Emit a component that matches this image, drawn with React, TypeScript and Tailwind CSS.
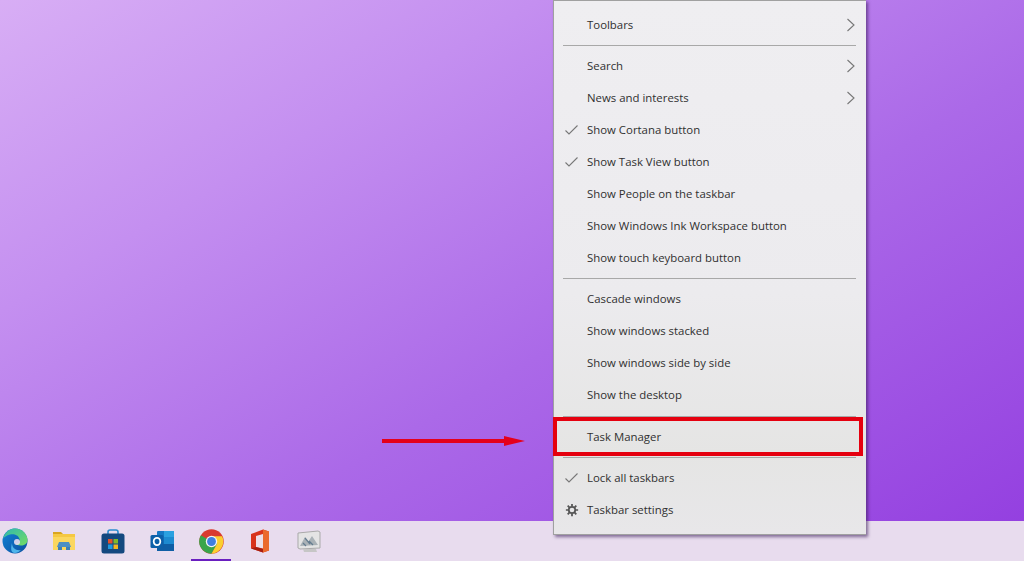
import React from "react";

const Check = () => (
  <svg width="15" height="12" viewBox="0 0 15 12" fill="none" stroke="#777" strokeWidth="1.1"><path d="M1.500 6.500 L5 10 L13.500 1.500" /></svg>
);
const Chevron = () => (
  <svg width="10" height="14" viewBox="0 0 10 14" fill="none" stroke="#777" strokeWidth="1.1"><path d="M1.500 1 L8 7 L1.500 13" /></svg>
);
const Gear = () => (
  <svg width="14" height="14" viewBox="0 0 24 24" fill="none" stroke="#555" strokeWidth="3">
    <circle cx="12" cy="12" r="5.500" />
    <path d="M12 1.500v4M12 18.500v4M1.500 12h4M18.500 12h4M4.600 4.600l2.800 2.800M16.600 16.600l2.800 2.800M4.600 19.400l2.800-2.800M16.600 7.400l2.800-2.800" />
  </svg>
);

function Row({ label, left, arrow }: { label: string; left?: React.ReactNode; arrow?: boolean }) {
  return (
    <div className="flex h-8 items-center">
      <div className="flex w-[33px] shrink-0 items-center justify-center pl-[2px]">{left}</div>
      <span className="flex-1 text-[11.400px] text-[#303030]">{label}</span>
      {arrow && <div className="mr-[10px] flex"><Chevron /></div>}
    </div>
  );
}
const Sep = ({ h }: { h: string }) => (
  <div className={`pl-[9px] pr-[10px] ${h}`}><div className="h-px w-full bg-[#a8a8a8]" /></div>
);

const Edge = () => (
  <svg width="26" height="26" viewBox="0 0 26 26">
    <defs>
      <linearGradient id="e1" x1="0" y1="0" x2="1" y2="1"><stop offset="0" stopColor="#2fb8b0" /><stop offset="1" stopColor="#74dc62" /></linearGradient>
      <linearGradient id="e2" x1="0" y1="0" x2="1" y2="1"><stop offset="0" stopColor="#1183d8" /><stop offset="1" stopColor="#0c4f9e" /></linearGradient>
    </defs>
    <circle cx="13" cy="13" r="12.500" fill="url(#e2)" />
    <path d="M1 11C3 3 9 .5 13 .5c7 0 12.500 5.500 12.500 11.500 0 4-3.500 5.500-6.500 5.500-3 0-5-1-5.500-2 3 0 5-1.500 4-4.500C16.500 7 12 5.500 8 6.500 4.500 7.500 2 9 1 11z" fill="url(#e1)" />
    <path d="M10 15c0 5 4 8 9 7-2 2-4 3-6 3C8 25 9 19 10 15z" fill="#4fb4ea" />
    <circle cx="15" cy="14" r="3" fill="#e8dcee" opacity=".9" />
  </svg>
);
const Folder = () => (
  <svg width="24" height="22" viewBox="0 0 24 22">
    <path d="M1 2h8l2 2H1z" fill="#d9a520" />
    <rect x="1" y="4" width="22" height="16" fill="#fbd75e" />
    <rect x="1" y="4" width="22" height="3" fill="#f5c842" />
    <path d="M7 12h10l2 5H5z" fill="#4c8fc4" />
    <rect x="6" y="17" width="4" height="3" fill="#3f7fb5" />
    <rect x="14" y="17" width="4" height="3" fill="#3f7fb5" />
  </svg>
);
const Store = () => (
  <svg width="24" height="25" viewBox="0 0 24 25">
    <path d="M7 5V3q0-2 2-2h6q2 0 2 2v2" fill="none" stroke="#2a8ccf" strokeWidth="1.600" />
    <rect x="0.500" y="4.500" width="23" height="20" rx="2.500" fill="#14497f" />
    <rect x="7" y="10" width="4.500" height="4.500" fill="#e2512c" />
    <rect x="12.500" y="10" width="4.500" height="4.500" fill="#7fb82a" />
    <rect x="7" y="15.500" width="4.500" height="4.500" fill="#1f9ae0" />
    <rect x="12.500" y="15.500" width="4.500" height="4.500" fill="#f2b51d" />
  </svg>
);
const Outlook = () => (
  <svg width="25" height="22" viewBox="0 0 25 22">
    <rect x="7" y="1" width="17" height="20" rx="1" fill="#1477c4" />
    <rect x="14" y="1" width="10" height="6" fill="#2aa0e0" />
    <rect x="14" y="7" width="10" height="7" fill="#1d8ad0" />
    <rect x="7" y="14" width="17" height="7" fill="#0f5ea5" />
    <rect x="0.500" y="5" width="13" height="13" rx="1.500" fill="#0d5fa8" />
    <ellipse cx="7" cy="11.500" rx="3.300" ry="3.700" fill="none" stroke="#fff" strokeWidth="1.800" />
  </svg>
);
const Chrome = () => (
  <svg width="25" height="25" viewBox="0 0 48 48">
    <circle cx="24" cy="24" r="23.500" fill="#d93a2f" />
    <path d="M24 24 L3.600 12.200 A23.500 23.500 0 0 0 24 47.500 L36 27z" fill="#3aa54a" />
    <path d="M24 14 H44.400 A23.500 23.500 0 0 1 24 47.500 L35 28z" fill="#fbcf30" />
    <circle cx="24" cy="24" r="11" fill="#f4f4f4" />
    <circle cx="24" cy="24" r="8.500" fill="#3f7fe0" />
  </svg>
);
const Office = () => (
  <svg width="20" height="24" viewBox="0 0 20 24">
    <path d="M1 5 L13 0.500 L19 2.500 V21.500 L13 23.500 L1 19.500z" fill="#d8341c" />
    <path d="M13 0.500 L19 2.500 V21.500 L13 23.500z" fill="#ea6a2c" />
    <path d="M6 7 L13 5 V19.500 L6 18z" fill="#ecdfe8" />
    <path d="M1 19.500 L13 23.500 V20 L6 18z" fill="#a81e10" />
  </svg>
);
const Photos = () => (
  <svg width="24" height="23" viewBox="0 0 24 23">
    <path d="M1 3 L21 1 L23 2 V18 L3 19 L1 18z" fill="#e4e4e4" stroke="#a9a9a9" />
    <path d="M3 16 L8 7 L11 12 L15 6 L21 15z" fill="#a9b1b6" />
    <path d="M6 13 L9 16M12 11 L16 15M8 8 L13 14" stroke="#647c8f" strokeWidth="1.200" />
    <path d="M6 19 H19 L20 22 H7z" fill="#c6c6c6" />
  </svg>
);

export default function App() {
  const icons = [<Edge />, <Folder />, <Store />, <Outlook />, <Chrome />, <Office />, <Photos />];
  return (
    <div className="relative flex h-[561px] w-[1024px] flex-col overflow-hidden font-['Open_Sans',sans-serif]">
      <div className="flex-1 bg-[linear-gradient(150deg,#d8aef5_0%,#c48ff0_28%,#ab69e8_60%,#9440e0_100%)]" />
      <div className="flex h-10 items-center bg-[#e8dcee] pl-0">
        {icons.map((icon, i) => (
          <div key={i} className="relative flex h-10 w-[49px] items-center justify-center blur-[0.5px] first:ml-[-9.500px]">
            {icon}
            {i === 4 && <div className="absolute bottom-0 left-[4.500px] h-[2px] w-[40px] bg-[#6a1fc0]" />}
          </div>
        ))}
      </div>

      <div className="absolute left-[553px] top-0 h-[535px] w-[313px] border-b border-l border-t border-[#a0a0a0] bg-[linear-gradient(180deg,#efeef1_0%,#ecebee_55%,#e5e5e4_85%,#e8e7e9_100%)] pt-2 shadow-[2px_2px_3px_rgba(60,30,90,0.6)]">
        <Row label="Toolbars" arrow />
        <Sep h="h-[9px] pt-1" />
        <Row label="Search" arrow />
        <Row label="News and interests" arrow />
        <Row label="Show Cortana button" left={<Check />} />
        <Row label="Show Task View button" left={<Check />} />
        <Row label="Show People on the taskbar" />
        <Row label="Show Windows Ink Workspace button" />
        <Row label="Show touch keyboard button" />
        <Sep h="h-[9px] pt-1" />
        <Row label="Cascade windows" />
        <Row label="Show windows stacked" />
        <Row label="Show windows side by side" />
        <Row label="Show the desktop" />
        <Sep h="h-[10px] pt-[5px]" />
        <Row label="Task Manager" />
        <Sep h="h-[9px] pt-1" />
        <Row label="Lock all taskbars" left={<Check />} />
        <Row label="Taskbar settings" left={<Gear />} />
      </div>

      <div className="absolute left-[553px] top-[417px] h-[39px] w-[310px] border-4 border-[#e5000f]" />
      <svg className="absolute left-[382px] top-[434px]" width="144" height="14" viewBox="0 0 144 14">
        <rect x="0" y="5" width="122" height="4" fill="#e5001a" />
        <path d="M122 2 L143 7 L122 12z" fill="#e5001a" />
      </svg>
    </div>
  );
}
